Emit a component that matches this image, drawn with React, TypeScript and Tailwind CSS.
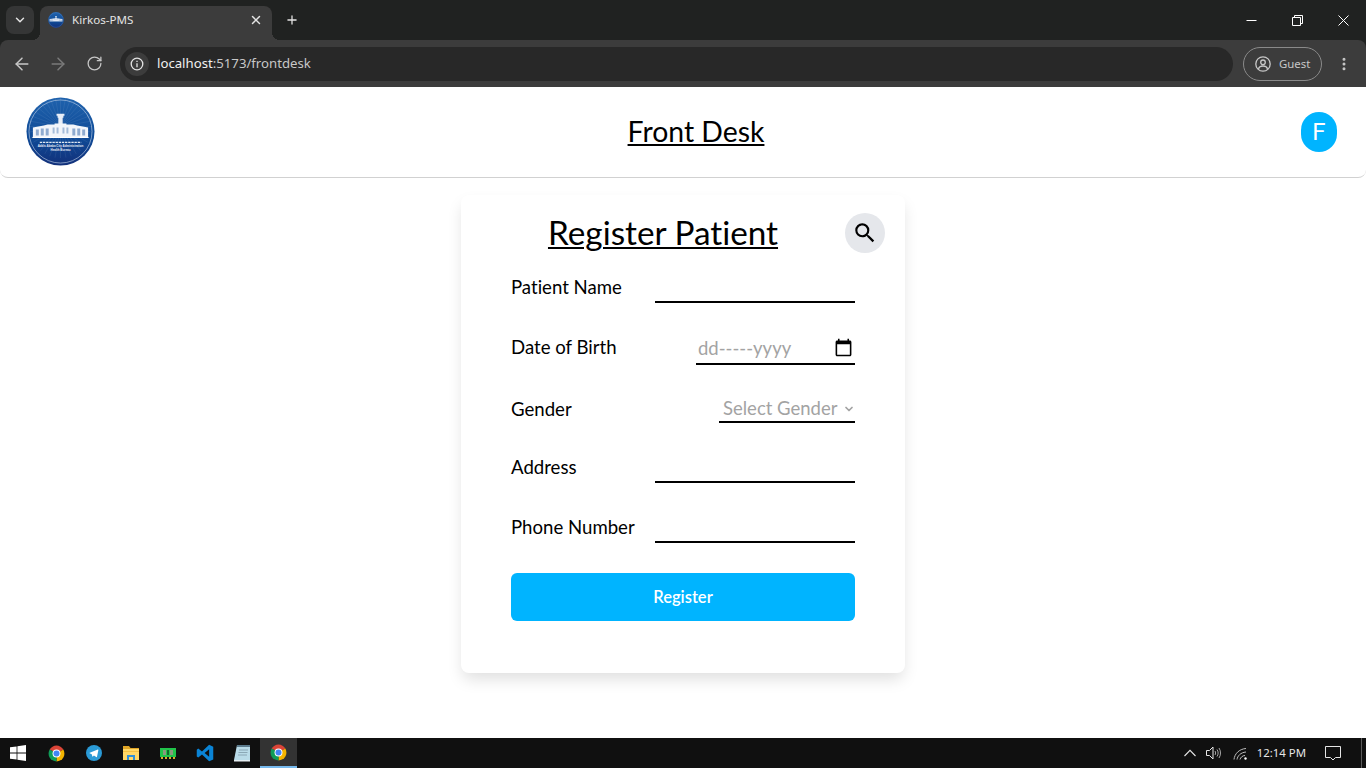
import { ArrowLeft, ArrowRight, ChevronDown, EllipsisVertical, Plus, RotateCw, X } from "lucide-react";
import { MdCalendarToday, MdSearch } from "react-icons/md";

// ─── Drawn icons ──────────────────────────────────────────────────────────────

function Logo({ size, detail = true }: { size: number; detail?: boolean }) {
  const rays = Array.from({ length: 36 }, (_, i) => (i * 360) / 36);
  return (
    <svg width={size} height={size} viewBox="0 0 70 70" className="shrink-0">
      <defs>
        <linearGradient id="logoBg" x1="0" y1="0" x2="0" y2="1">
          <stop offset="0" stopColor="#1f62ad" />
          <stop offset="0.6" stopColor="#0f4a96" />
          <stop offset="1" stopColor="#12307a" />
        </linearGradient>
      </defs>
      <circle cx="35" cy="35" r="34.5" fill="url(#logoBg)" />
      {detail &&
        rays.map((a) => (
          <line
            key={a}
            x1="35"
            y1="30"
            x2={35 + 32 * Math.cos((a * Math.PI) / 180)}
            y2={30 + 32 * Math.sin((a * Math.PI) / 180)}
            stroke="#ffffff"
            strokeOpacity="0.07"
            strokeWidth="1"
          />
        ))}
      <circle cx="35" cy="35" r="32" fill="none" stroke="#c8d8ee" strokeWidth="0.6" />
      {/* tower */}
      <path d="M31 17h8v2h-1v2h-.8v9h-4.400v-9H32v-2h-1z" fill="#e8eef7" />
      {/* building */}
      <path d="M7 31l11-2 4-1h7v-1h12v1h7l4 1 11 2v10H7z" fill="#f2f5fa" />
      <path d="M10 33h3v6h-3zM15 32h3v7h-3zM20 32h3v7h-3zM47 32h3v7h-3zM52 32h3v7h-3zM57 33h3v6h-3z" fill="#8fabd0" />
      <path d="M27 31h2v6h-2zM31 31h2v6h-2zM37 31h2v6h-2zM41 31h2v6h-2z" fill="#a5bcd9" />
      <path d="M6.500 40.500h57v1h-57z" fill="#ffffff" />
      {detail && (
        <>
          <line x1="14" y1="46" x2="56" y2="46" stroke="#dfe8f4" strokeWidth="1.400" strokeDasharray="2.400 .8" />
          <text x="35" y="51" textAnchor="middle" fontSize="3" fontWeight="700" fill="#e6edf7" fontFamily="'Liberation Sans', sans-serif">
            Addis Ababa City Administration
          </text>
          <text x="35" y="55" textAnchor="middle" fontSize="3" fontWeight="700" fill="#e6edf7" fontFamily="'Liberation Sans', sans-serif">
            Health Bureau
          </text>
        </>
      )}
    </svg>
  );
}

function ChromeIcon() {
  return (
    <svg width="19" height="19" viewBox="0 0 24 24">
      <path d="M12 12L3.340 7A10 10 0 0 1 20.660 7z" fill="#db4437" />
      <path d="M12 12L20.660 7A10 10 0 0 1 12 22z" fill="#f4b400" />
      <path d="M12 12L12 22A10 10 0 0 1 3.340 7z" fill="#0f9d58" />
      <circle cx="12" cy="12" r="5" fill="#ffffff" />
      <circle cx="12" cy="12" r="3.800" fill="#4285f4" />
    </svg>
  );
}

function WindowsIcon() {
  return (
    <svg width="16" height="16" viewBox="0 0 16 16" fill="#ffffff">
      <path d="M0 2.300l6.600-.9v6.200H0zM7.400 1.300L16 0v7.600H7.400zM0 8.400h6.600v6.200L0 13.700zM7.400 8.400H16V16l-8.600-1.200z" />
    </svg>
  );
}

function TelegramIcon() {
  return (
    <svg width="16" height="16" viewBox="0 0 16 16">
      <circle cx="8" cy="8" r="8" fill="#2a9ad6" />
      <path d="M3.200 7.900l8.600-3.400c.4-.1.7.1.6.6l-1.400 6.600c-.1.500-.4.600-.8.400L7.900 10.600l-1 1c-.2.200-.4.200-.5-.1L5.700 9.300z" fill="#ffffff" />
    </svg>
  );
}

function FolderIcon() {
  return (
    <svg width="16" height="16" viewBox="0 0 16 16">
      <path d="M0 1h6l1.500 2H16v2H0z" fill="#e0a526" />
      <path d="M0 4h16v11H0z" fill="#ffd766" />
      <path d="M0 6h16v1H0z" fill="#f3c043" />
      <path d="M4 10h8v5h-2v-3H6v3H4z" fill="#2f8fd8" />
    </svg>
  );
}

function RamIcon() {
  return (
    <svg width="16" height="16" viewBox="0 0 16 16">
      <path d="M0 3h16v9H0z" fill="#21c44a" />
      <path d="M3 5h3v5H3zM10 5h3v5h-3z" fill="#8a9a7c" />
      <path d="M7 5h2v5H7z" fill="#0f6b2a" />
      <path d="M1 12h2v2H1zM5 12h2v2H5zM9 12h2v2H9zM13 12h2v2h-2z" fill="#d8b02c" />
    </svg>
  );
}

function VscodeIcon() {
  return (
    <svg width="18" height="18" viewBox="0 0 24 24">
      <path d="M17.500 1L23 3.500v17L17.500 23 8 14l-5 4-2-1.500V7.500L3 6l5 4zM17.500 7L11.500 12l6 5z" fill="#0a84d6" />
    </svg>
  );
}

function NotepadIcon() {
  return (
    <svg width="16" height="18" viewBox="0 0 16 18">
      <path d="M3 1h13v15H0z" fill="#b9dbe8" />
      <path d="M3 1h13v2H3z" fill="#5b7a8c" />
      <path d="M5 6h9M4.500 8.500h9M4 11h9" stroke="#7f9aa8" strokeWidth="0.800" />
      <path d="M0 16h16v1.500H0z" fill="#e6eef2" />
    </svg>
  );
}

function TaskIcon({ children, active }: { children: React.ReactNode; active?: boolean }) {
  return (
    <div
      className={`flex h-[30px] w-[37px] items-center justify-center ${
        active ? "border-b-2 border-[#76b9ed] bg-[#333333]" : ""
      }`}
    >
      {children}
    </div>
  );
}

// ─── Browser chrome ───────────────────────────────────────────────────────────

function BrowserBar() {
  return (
    <div className="shrink-0 bg-[#202221] font-['Noto_Sans',sans-serif]">
      <div className="flex h-10 items-end pl-[6px]">
        <div className="mb-[6px] flex h-7 w-7 items-center justify-center rounded-lg bg-[#353636] text-[#e3e3e3]">
          <ChevronDown size={14} strokeWidth={2.5} />
        </div>
        <div className="relative z-10 ml-[6px] flex h-[34px] w-[232px] items-center rounded-t-lg bg-[#3c3c3c] pb-[6px] pl-2 pr-[9px]">
          <span className="absolute -left-2 bottom-0 h-2 w-2 bg-[radial-gradient(circle_at_0_0,transparent_8px,#3c3c3c_8px)]" />
          <span className="absolute -right-2 bottom-0 h-2 w-2 bg-[radial-gradient(circle_at_100%_0,transparent_8px,#3c3c3c_8px)]" />
          <Logo size={16} detail={false} />
          <span className="ml-2 flex-1 text-[11.6px] text-[#e3e3e3]">Kirkos-PMS</span>
          <X size={14} strokeWidth={2.5} className="text-[#e3e3e3]" />
        </div>
        <div className="mb-[6px] ml-[13px] flex h-7 w-[14px] items-center justify-center text-[#e3e3e3]">
          <Plus size={18} strokeWidth={2.2} />
        </div>
        <div className="mb-[5px] ml-auto flex h-[30px] items-center text-white">
          <div className="flex w-[46px] justify-center">
            <svg width="11" height="11" viewBox="0 0 11 11" stroke="#ffffff" fill="none">
              <path d="M0.500 5.500h10" />
            </svg>
          </div>
          <div className="flex w-[46px] justify-center">
            <svg width="11" height="11" viewBox="0 0 11 11" stroke="#ffffff" fill="none">
              <path d="M0.500 2.500h8v8h-8z" />
              <path d="M2.500 2.500v-2h8v8h-2" />
            </svg>
          </div>
          <div className="flex w-[46px] justify-center">
            <svg width="11" height="11" viewBox="0 0 11 11" stroke="#ffffff" fill="none">
              <path d="M0.500 0.500l10 10M10.500 0.500l-10 10" />
            </svg>
          </div>
        </div>
      </div>
      <div className="flex h-[47px] items-center rounded-t-lg bg-[#3c3c3c] pl-1 pr-[14px]">
        <div className="flex w-9 justify-center">
          <ArrowLeft size={20} strokeWidth={1.8} className="text-[#c7c7c7]" />
        </div>
        <div className="flex w-9 justify-center">
          <ArrowRight size={20} strokeWidth={1.8} className="text-[#7a7a7a]" />
        </div>
        <div className="flex w-9 justify-center">
          <RotateCw size={17} strokeWidth={1.8} className="text-[#c7c7c7]" />
        </div>
        <div className="ml-2 flex h-[34px] flex-1 items-center rounded-full bg-[#282828] pl-[5px]">
          <div className="flex h-6 w-6 items-center justify-center rounded-full bg-[#3c3c3c]">
            <svg width="14" height="14" viewBox="0 0 14 14" fill="none" stroke="#e3e3e3" strokeWidth="1.300">
              <circle cx="7" cy="7" r="5.800" />
              <path d="M7 6.200v4M7 3.700v1.300" />
            </svg>
          </div>
          <span className="ml-2 text-[13.2px] text-[#c7c7c7]">
            <span className="text-[#f1f1f1]">localhost</span>:5173/frontdesk
          </span>
        </div>
        <div className="ml-[10px] flex h-[34px] w-[79px] items-center rounded-full border border-[#8a8a8a] pl-[11px] text-[#c7c7c7]">
          <svg width="16" height="16" viewBox="0 0 16 16" fill="none" stroke="#c7c7c7" strokeWidth="1.300">
            <circle cx="8" cy="8" r="7.200" />
            <circle cx="8" cy="6.300" r="2.300" />
            <path d="M3.500 13c.5-2.300 2.300-3 4.500-3s4 .7 4.500 3" />
          </svg>
          <span className="ml-2 text-[11.4px]">Guest</span>
        </div>
        <EllipsisVertical size={16} strokeWidth={2.5} className="ml-[14px] text-[#c7c7c7]" />
      </div>
    </div>
  );
}

// ─── Form ─────────────────────────────────────────────────────────────────────

function Field({ label }: { label: string }) {
  return (
    <div className="flex items-start justify-between">
      <label className="text-[18.6px] leading-7 text-black">{label}</label>
      <input type="text" className="h-[30px] w-[200px] border-b-2 border-black outline-none" />
    </div>
  );
}

function RegisterCard() {
  return (
    <div className="h-[478px] w-[444px] rounded-lg bg-white shadow-[0_8px_16px_-2px_rgba(0,0,0,0.13)]">
      <div className="flex h-[78px] items-center px-5 pb-[2px]">
        <h2 className="-mt-[2px] flex-1 text-center text-[33.300px] leading-10 text-black underline decoration-2 underline-offset-2">
          Register Patient
        </h2>
        <button className="flex h-10 w-10 items-center justify-center rounded-full bg-[#e5e7eb] text-black">
          <MdSearch size={26} />
        </button>
      </div>
      <form className="flex flex-col gap-[30px] px-[50px]">
        <Field label="Patient Name" />
        <div className="flex items-start justify-between">
          <label className="text-[18.6px] leading-7 text-black">Date of Birth</label>
          <div className="flex h-8 w-[159px] items-center justify-between border-b-2 border-black pl-[2px] pr-[2px] pt-[1px] text-[18.500px] text-[#a3a3a3]">
            <span>dd-----yyyy</span>
            <MdCalendarToday size={19} className="-mt-[2px] text-black" />
          </div>
        </div>
        <div className="flex items-start justify-between">
          <label className="text-[18.6px] leading-7 text-black">Gender</label>
          <div className="flex h-7 w-[136px] items-center justify-between border-b-2 border-black pl-1 pt-[2px] text-[18.500px] text-[#a3a3a3]">
            <span>Select Gender</span>
            <ChevronDown size={12} strokeWidth={3.5} />
          </div>
        </div>
        <Field label="Address" />
        <Field label="Phone Number" />
        <button type="button" className="h-12 rounded-md bg-[#00b4ff] text-[16.500px] font-semibold text-white">
          Register
        </button>
      </form>
    </div>
  );
}

// ─── Page ─────────────────────────────────────────────────────────────────────

export default function App() {
  return (
    <div className="flex h-screen flex-col overflow-hidden bg-white">
      <BrowserBar />
      <div className="flex min-h-0 flex-1 flex-col font-['Lato',sans-serif] [font-variant-ligatures:none]">
        <header className="flex h-[91px] shrink-0 items-center justify-between rounded-b-lg border-b border-[#d1d1d1] pl-[26px] pr-[29px]">
          <div className="mb-[1px]">
            <Logo size={69} />
          </div>
          <h1 className="mb-[2px] mr-[4px] text-[28.400px] leading-9 text-black underline decoration-2 underline-offset-2">Front Desk</h1>
          <div className="flex h-10 w-9 items-center justify-center rounded-full bg-[#00b4ff] font-['Roboto',sans-serif] text-2xl text-white">
            F
          </div>
        </header>
        <main className="flex flex-1 justify-center pt-[17px]">
          <RegisterCard />
        </main>
      </div>
      <footer className="flex h-[30px] shrink-0 items-center bg-[#101010] font-['Noto_Sans',sans-serif]">
        <div className="flex w-[38px] justify-start pl-[10px]">
          <WindowsIcon />
        </div>
        <TaskIcon><ChromeIcon /></TaskIcon>
        <TaskIcon><TelegramIcon /></TaskIcon>
        <TaskIcon><FolderIcon /></TaskIcon>
        <TaskIcon><RamIcon /></TaskIcon>
        <TaskIcon><VscodeIcon /></TaskIcon>
        <TaskIcon><NotepadIcon /></TaskIcon>
        <TaskIcon active><ChromeIcon /></TaskIcon>
        <div className="ml-auto flex items-center text-[#e6e6e6]">
          <svg width="12" height="8" viewBox="0 0 12 8" fill="none" stroke="#e6e6e6" strokeWidth="1.100">
            <path d="M0.500 7L6 1.300 11.500 7" />
          </svg>
          <svg className="ml-[10px]" width="16" height="14" viewBox="0 0 16 14" fill="none" stroke="#e6e6e6">
            <path d="M0.500 4.500h3L7 1v12L3.500 9.500h-3z" />
            <path d="M9 5c.8 1.200.8 2.800 0 4M11 3.500c1.500 2 1.500 5 0 7M13 2c2 3 2 7 0 10" strokeOpacity="0.7" />
          </svg>
          <svg className="ml-[11px]" width="15" height="13" viewBox="0 0 15 13" fill="none" stroke="#bdbdbd">
            <path d="M1 12.500C1.500 7 6 2 13 1.500M4 12.500C4.500 9 7.500 5.500 13 5M7 12.500C7.500 10.500 9.500 8.500 12 8.500" />
            <circle cx="12.500" cy="11.500" r="1.200" fill="#ffffff" stroke="none" />
          </svg>
          <span className="ml-[9px] text-[11.400px]">12:14 PM</span>
          <svg className="ml-[19px]" width="16" height="16" viewBox="0 0 16 16" fill="none" stroke="#e6e6e6">
            <path d="M0.500 1.500h15v11h-5L8 15l-2.500-2.500h-5z" />
          </svg>
          <div className="ml-[20px] h-[30px] w-[5px] border-l border-[#5a5a5a]" />
        </div>
      </footer>
    </div>
  );
}
